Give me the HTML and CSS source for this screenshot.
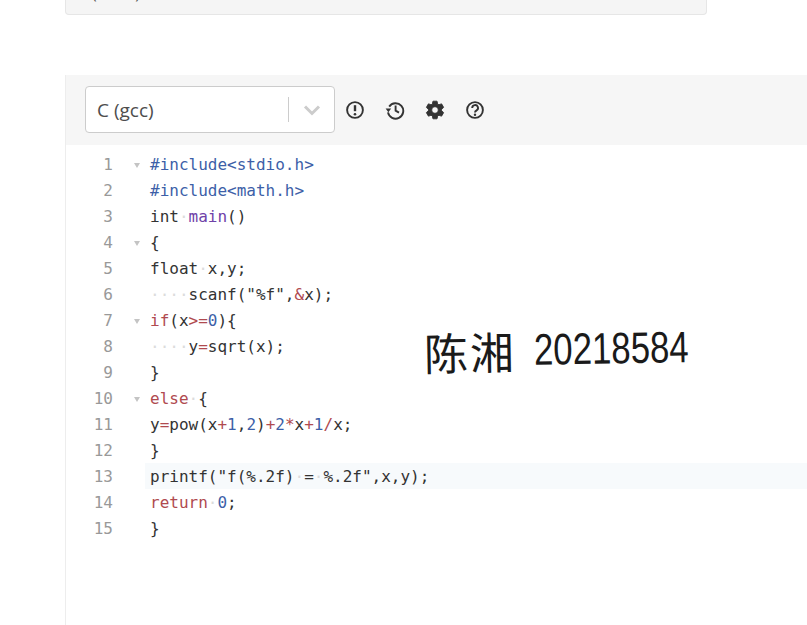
FILE: index.html
```html
<!DOCTYPE html>
<html lang="zh">
<head>
<meta charset="utf-8">
<title>Editor</title>
<link rel="stylesheet" href="styles.css">
</head>
<body>
<div class="prev-panel"><span class="prev-text">(Code)</span></div>
<section class="editor">
  <div class="toolbar">
    <div class="select">
      <span class="select-value">C (gcc)</span>
      <span class="select-sep"></span>
      <svg class="chevron" viewBox="0 0 18 12" width="18" height="12"><path d="M2 2.5l7 7 7-7"/></svg>
    </div>
    <div class="tools">
      <svg class="icon" viewBox="0 0 20 20" width="20" height="20"><circle cx="10" cy="10" r="7.9"/><path class="thick" d="M10 5.2v6"/><circle class="dot" cx="10" cy="14.2" r="1.3"/></svg>
      <svg class="icon" viewBox="0 0 20 20" width="20" height="20"><path d="M4.2 6.6A7.7 7.7 0 1 1 3 12.4"/><path class="solid" d="M0.6 8.6h5.6l-2.8 3.6z"/><path d="M10.6 5.6v5l3.4 2"/></svg>
      <svg class="icon gear" viewBox="0 0 24 24" width="22" height="22"><path d="M19.14 12.94c.04-.3.06-.61.06-.94 0-.32-.02-.64-.07-.94l2.03-1.58c.18-.14.23-.41.12-.61l-1.92-3.32c-.12-.22-.37-.29-.59-.22l-2.39.96c-.5-.38-1.03-.7-1.62-.94l-.36-2.54c-.04-.24-.24-.41-.48-.41h-3.84c-.24 0-.43.17-.47.41l-.36 2.54c-.59.24-1.13.57-1.62.94l-2.39-.96c-.22-.08-.47 0-.59.22L2.74 8.87c-.12.21-.08.47.12.61l2.03 1.58c-.05.3-.09.63-.09.94s.02.64.07.94l-2.03 1.58c-.18.14-.23.41-.12.61l1.92 3.32c.12.22.37.29.59.22l2.39-.96c.5.38 1.03.7 1.62.94l.36 2.54c.05.24.24.41.48.41h3.84c.24 0 .44-.17.47-.41l.36-2.54c.59-.24 1.13-.56 1.62-.94l2.39.96c.22.08.47 0 .59-.22l1.92-3.32c.12-.22.07-.47-.12-.61l-2.01-1.58zM12 15.6c-1.98 0-3.6-1.62-3.6-3.6s1.62-3.6 3.6-3.6 3.6 1.62 3.6 3.6-1.62 3.6-3.6 3.6z"/></svg>
      <svg class="icon" viewBox="0 0 20 20" width="20" height="20"><circle cx="10" cy="10" r="7.9"/><path d="M7.2 8a2.9 2.9 0 1 1 4.4 2.4c-1 .6-1.6 1.1-1.6 2.2"/><circle class="dot" cx="10" cy="14.8" r="1.2"/></svg>
    </div>
  </div>
  <div class="code">
    <div class="line"><span class="num">1</span><span class="fold open"></span><span class="src"><span class="meta">#include&lt;stdio.h&gt;</span></span></div>
    <div class="line"><span class="num">2</span><span class="fold"></span><span class="src"><span class="meta">#include&lt;math.h&gt;</span></span></div>
    <div class="line"><span class="num">3</span><span class="fold"></span><span class="src">int<span class="ws">·</span><span class="fn">main</span>()</span></div>
    <div class="line"><span class="num">4</span><span class="fold open"></span><span class="src">{</span></div>
    <div class="line"><span class="num">5</span><span class="fold"></span><span class="src">float<span class="ws">·</span>x,y;</span></div>
    <div class="line"><span class="num">6</span><span class="fold"></span><span class="src"><span class="ws">····</span>scanf("%f",<span class="kw">&amp;</span>x);</span></div>
    <div class="line"><span class="num">7</span><span class="fold open"></span><span class="src"><span class="kw">if</span>(x<span class="kw">&gt;=</span><span class="lit">0</span>){</span></div>
    <div class="line"><span class="num">8</span><span class="fold"></span><span class="src"><span class="ws">····</span>y<span class="kw">=</span>sqrt(x);</span></div>
    <div class="line"><span class="num">9</span><span class="fold"></span><span class="src">}</span></div>
    <div class="line"><span class="num">10</span><span class="fold open"></span><span class="src"><span class="kw">else</span><span class="ws">·</span>{</span></div>
    <div class="line"><span class="num">11</span><span class="fold"></span><span class="src">y<span class="kw">=</span>pow(x<span class="kw">+</span><span class="lit">1</span>,<span class="lit">2</span>)<span class="kw">+</span><span class="lit">2</span><span class="kw">*</span>x<span class="kw">+</span><span class="lit">1</span><span class="kw">/</span>x;</span></div>
    <div class="line"><span class="num">12</span><span class="fold"></span><span class="src">}</span></div>
    <div class="line active"><span class="num">13</span><span class="fold"></span><span class="src">printf("f(%.2f)<span class="ws">·</span>=<span class="ws">·</span>%.2f",x,y);</span></div>
    <div class="line"><span class="num">14</span><span class="fold"></span><span class="src"><span class="kw">return</span><span class="ws">·</span><span class="lit">0</span>;</span></div>
    <div class="line"><span class="num">15</span><span class="fold"></span><span class="src">}</span></div>
  </div>
</section>
<div class="signature"><span class="sig-name">陈湘</span><span class="sig-id">20218584</span></div>
</body>
</html>
```
FILE: styles.css
```css
html, body {
  margin: 0;
  height: 100%;
  overflow: hidden;
  background: #fff;
}
body {
  display: flex;
  flex-direction: column;
  padding-left: 65px;
  box-sizing: border-box;
  font-family: "Open Sans", "Noto Sans CJK SC", sans-serif;
}
.prev-panel {
  height: 14px;
  flex: none;
  display: flex;
  align-items: flex-end;
  padding-left: 26px;
  width: 614px;
  overflow: hidden;
  background: #f5f5f5;
  border: 1px solid #e6e6e6;
  border-top: 0;
  border-radius: 0 0 4px 4px;
  font-size: 16px;
  color: #555;
}
.prev-text {
  display: block;
  line-height: 24px;
  margin-bottom: 9px;
}
.editor {
  margin-top: 60px;
  flex: 1;
  border-left: 1px solid #ededed;
  display: flex;
  flex-direction: column;
}
.toolbar {
  height: 70px;
  flex: none;
  background: #f6f6f6;
  display: flex;
  align-items: center;
  padding-left: 19px;
  gap: 10px;
}
.select {
  width: 237px;
  height: 45px;
  background: #fff;
  border: 1px solid #ccc;
  border-radius: 4px;
  display: flex;
  align-items: center;
  padding-left: 11px;
  margin-bottom: 1px;
}
.select-value {
  flex: 1;
  font-size: 19px;
  color: #4d4d4d;
}
.select-sep {
  width: 1px;
  height: 25px;
  background: #ccc;
  margin-right: 14px;
}
.chevron {
  margin-right: 13px;
  fill: none;
  stroke: #ccc;
  stroke-width: 3;
}
.tools {
  display: flex;
  align-items: center;
  gap: 20px;
}
.icon {
  fill: none;
  stroke: #333;
  stroke-width: 1.9;
}
.icon .thick { stroke-width: 2.4; }
.icon .dot, .icon .solid { fill: #333; stroke: none; }
.gear {
  fill: #333;
  stroke: #333;
  stroke-width: 1;
  margin: 0 -1px;
}
.code {
  padding-top: 6px;
  font-family: "DejaVu Sans Mono", monospace;
  font-size: 16px;
  color: #333;
}
.line {
  height: 26px;
  line-height: 28px;
  display: flex;
  white-space: pre;
}
.num {
  width: 47px;
  text-align: right;
  color: #999;
  flex: none;
}
.fold {
  width: 32px;
  flex: none;
  position: relative;
}
.fold.open::after {
  content: "";
  position: absolute;
  left: 21px;
  top: 12px;
  border-left: 3.5px solid transparent;
  border-right: 3.5px solid transparent;
  border-top: 5px solid #c4c4c4;
}
.src {
  flex: 1;
  padding-left: 5px;
}
.active .src { background: #f7fafc; }
.meta { color: #3d5fa8; }
.kw { color: #b04a4f; }
.fn { color: #6f42a8; }
.lit { color: #3d5fa8; }
.ws { color: #dcdcdc; }
.signature {
  position: absolute;
  left: 424px;
  top: 325px;
  height: 48px;
  display: flex;
  align-items: center;
  color: #1a1a1a;
  transform: rotate(-1deg);
}
.sig-name {
  font-family: "Noto Sans CJK SC", sans-serif;
  font-size: 44px;
  font-weight: 400;
  width: 110px;
  letter-spacing: 2px;
}
.sig-id {
  font-family: "Liberation Sans", sans-serif;
  font-size: 44px;
  display: block;
  transform: scaleX(.79);
  transform-origin: left center;
}
```
